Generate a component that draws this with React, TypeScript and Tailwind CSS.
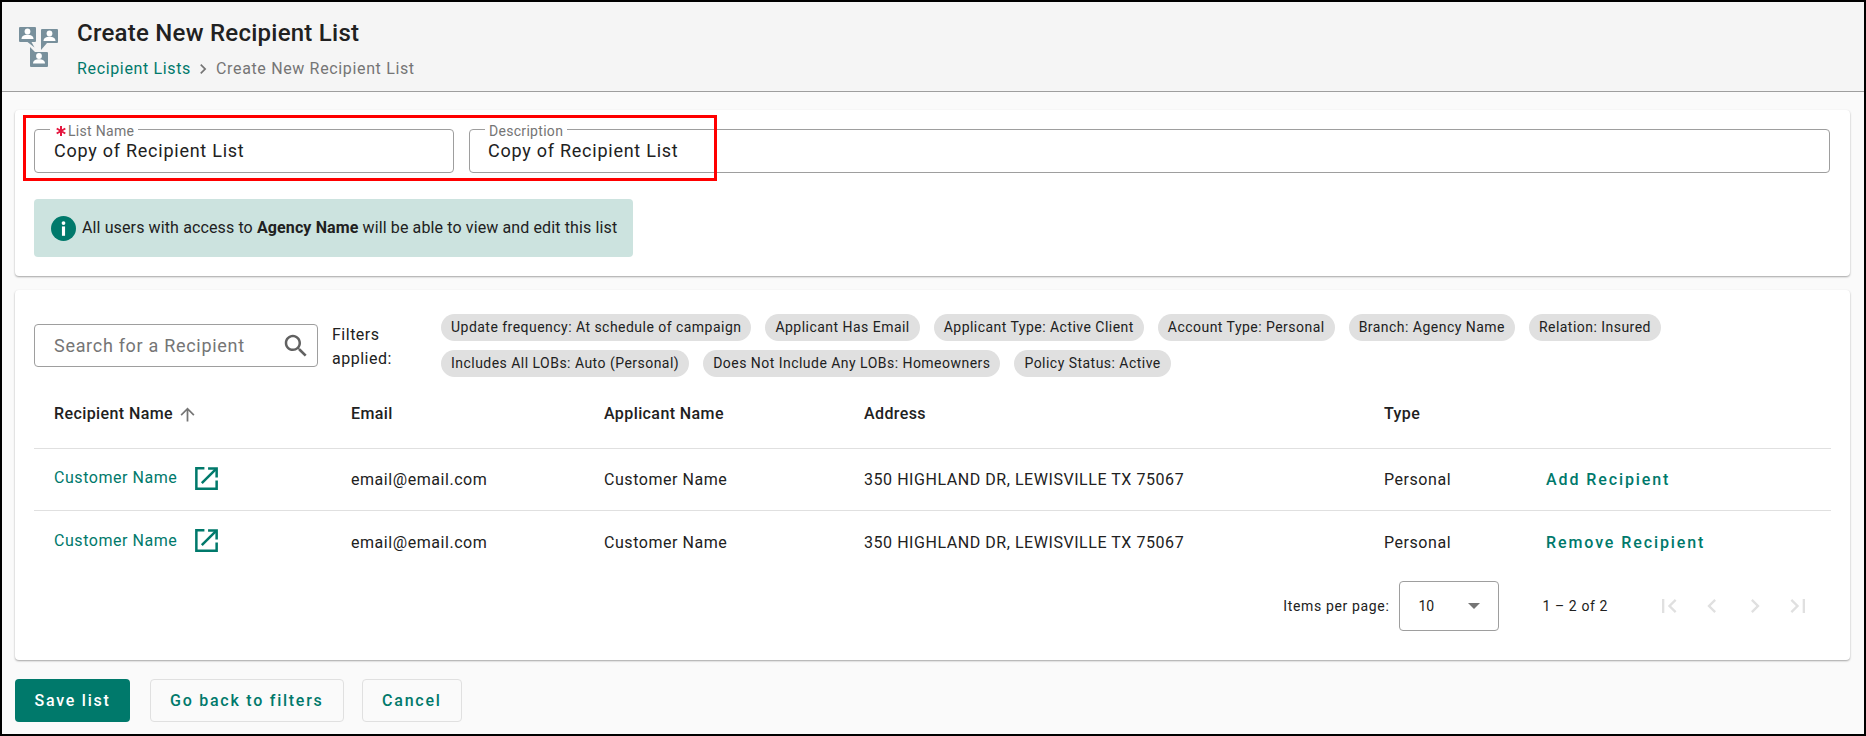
const chipRows = [
  [
    'Update frequency: At schedule of campaign',
    'Applicant Has Email',
    'Applicant Type: Active Client',
    'Account Type: Personal',
    'Branch: Agency Name',
    'Relation: Insured',
  ],
  ['Includes All LOBs: Auto (Personal)', 'Does Not Include Any LOBs: Homeowners', 'Policy Status: Active'],
];

const rows = [
  { id: 1, action: 'Add Recipient' },
  { id: 2, action: 'Remove Recipient' },
];

const gridCols = 'grid grid-cols-[297px_253px_260px_520px_162px_1fr]';

function MatIcon({ d, className }: { d: string; className: string }) {
  return (
    <svg viewBox="0 0 24 24" fill="currentColor" className={className}>
      <path d={d} />
    </svg>
  );
}

function Person({ x, y }: { x: number; y: number }) {
  return (
    <g fill="#fff" transform={`translate(${x} ${y})`}>
      <circle cx="0" cy="0" r="2.9" />
      <path d="M-6 7.5c0-3 2.8-4.2 6-4.2s6 1.2 6 4.2z" />
    </g>
  );
}

function ListIcon() {
  return (
    <svg viewBox="0 0 40 40" className="w-10 h-10 shrink-0">
      <path fill="#78909c" d="M1 0h15a1 1 0 0 1 1 1v13a1 1 0 0 1-1 1h-3.5l3 5.5-7-5.5H1a1 1 0 0 1-1-1V1a1 1 0 0 1 1-1z" />
      <path fill="#78909c" d="M23 2h15a1 1 0 0 1 1 1v12a1 1 0 0 1-1 1H28l-6 7V3a1 1 0 0 1 1-1z" />
      <path fill="#78909c" d="M11 20l5 5h12a1 1 0 0 1 1 1v13a1 1 0 0 1-1 1H12a1 1 0 0 1-1-1z" />
      <Person x={8.5} y={4.5} />
      <Person x={30.5} y={6.5} />
      <Person x={20} y={29} />
    </svg>
  );
}

function ExternalIcon() {
  return (
    <svg viewBox="0 0 22 22" fill="none" stroke="#00796b" strokeWidth="2.4" className="w-[23px] h-[23px] ml-[18px] shrink-0">
      <path d="M9 1.3H1.3v19.4h19.4V13" />
      <path d="M6.5 15.5L20 2" />
      <path d="M12.5 1.5h8.2v8.5" />
    </svg>
  );
}

function RequiredMark() {
  return (
    <svg viewBox="0 0 10 10" fill="none" stroke="#e5173f" strokeWidth="2" className="w-[10px] h-[10px] ml-[2px] mr-[2px] shrink-0">
      <path d="M5 0v10M0.7 2.5l8.6 5M0.7 7.5l8.6-5" />
    </svg>
  );
}

function LabeledInput({ label, required, className }: { label: string; required?: boolean; className: string }) {
  return (
    <div className={`relative h-[44px] rounded-[4px] border border-[#9e9e9e] flex items-center pb-[2px] text-[18px] tracking-[0.75px] text-[#212121] ${className}`}>
      <span className="absolute left-[15px] -top-[6px] bg-white px-[4px] flex items-center text-[14px] leading-[14px] tracking-[0.3px] text-[#757575]">
        {required && <RequiredMark />}
        {label}
      </span>
      Copy of Recipient List
    </div>
  );
}

function ActionButton({ children, primary }: { children: string; primary?: boolean }) {
  return (
    <button
      className={
        primary
          ? 'h-[43px] px-[19.5px] mr-[1.5px] rounded-[4px] bg-[#00796b] text-white text-[16px] font-medium tracking-[1.75px]'
          : 'h-[43px] px-[19px] rounded-[4px] border border-[#e0e0e0] text-[#00796b] text-[16px] font-medium tracking-[1.75px]'
      }
    >
      {children}
    </button>
  );
}

export default function App() {
  return (
    <div className="h-[736px] border-2 border-black bg-[#fafafa] font-['Roboto',sans-serif] flex flex-col overflow-hidden">
      <header className="h-[90px] shrink-0 bg-[#f5f5f5] border-b border-[#9e9e9e] flex pl-[17px] pt-[25px]">
        <ListIcon />
        <div className="ml-[18px] -mt-[10px]">
          <h1 className="text-[24px] leading-[32px] font-medium tracking-[0.25px] text-[#212121]">Create New Recipient List</h1>
          <div className="mt-[8px] flex items-center text-[16px] leading-[24px] tracking-[0.65px]">
            <span className="text-[#00796b]">Recipient Lists</span>
            <MatIcon d="M10 6L8.59 7.41 13.17 12l-4.58 4.59L10 18l6-6z" className="w-[20px] h-[20px] mx-[2px] text-[#757575]" />
            <span className="ml-px text-[#757575]">Create New Recipient List</span>
          </div>
        </div>
      </header>

      <main className="flex-1 px-[13px] pt-[18px]">
        <section className="relative h-[166px] w-[1835px] bg-white rounded-[4px] shadow-[0_1px_2px_rgba(0,0,0,0.35)] pl-[19px] pr-[20px] pt-[19px]">
          <div className="flex gap-[15px]">
            <LabeledInput label="List Name" required className="w-[420px] pl-[19px]" />
            <LabeledInput label="Description" className="flex-1 pl-[18px]" />
          </div>
          <div className="mt-[26px] w-[599px] h-[58px] rounded-[4px] bg-[#cce3df] flex items-center pl-[17px] text-[16px] tracking-[0.12px] text-[#212121]">
            <svg viewBox="0 0 24 24" className="w-[25px] h-[25px] mr-[6px] shrink-0">
              <circle cx="12" cy="12" r="12" fill="#00796b" />
              <rect x="10.5" y="10" width="3" height="9" fill="#fff" />
              <circle cx="12" cy="6.8" r="1.8" fill="#fff" />
            </svg>
            <span>
              All users with access to <b className="font-bold">Agency Name</b> will be able to view and edit this list
            </span>
          </div>
          {/* annotation box from the screenshot */}
          <div className="absolute left-[8px] top-[5px] w-[694px] h-[66px] border-[3px] border-[#ff0000]" />
        </section>

        <section className="mt-[14px] h-[370px] w-[1835px] bg-white rounded-[4px] shadow-[0_1px_2px_rgba(0,0,0,0.35)] px-[19px] pt-[24px]">
          <div className="flex items-center h-[63px]">
            <div className="w-[284px] h-[43px] rounded-[4px] border border-[#9e9e9e] flex items-center justify-between pl-[19px] pr-[6px] text-[18px] tracking-[0.7px] text-[#757575]">
              Search for a Recipient
              <MatIcon
                d="M15.5 14h-.79l-.28-.27C15.41 12.59 16 11.11 16 9.5 16 5.91 13.09 3 9.5 3S3 5.91 3 9.5 5.91 16 9.5 16c1.61 0 3.09-.59 4.23-1.57l.27.28v.79l5 4.99L20.49 19l-4.99-5zm-6 0C7.01 14 5 11.99 5 9.5S7.01 5 9.5 5 14 7.01 14 9.5 11.99 14 9.5 14z"
                className="w-[30px] h-[30px] text-[#616161]"
              />
            </div>
            <div className="ml-[14px] w-[109px] pt-[2px] text-[16px] leading-[24px] tracking-[0.5px] text-[#212121]">
              Filters
              <br />
              applied:
            </div>
            <div className="flex flex-col gap-[9px]">
              {chipRows.map((chipRow) => (
                <div key={chipRow[0]} className="flex gap-[14px]">
                  {chipRow.map((chip) => (
                    <span
                      key={chip}
                      className="h-[27px] px-[10px] rounded-full bg-[#e0e0e0] flex items-center text-[14px] tracking-[0.47px] text-[#212121]"
                    >
                      {chip}
                    </span>
                  ))}
                </div>
              ))}
            </div>
          </div>

          <div className={`${gridCols} h-[72px] items-center pl-[20px] pt-[3px] border-b border-[#e0e0e0] text-[16px] font-medium tracking-[0.4px] text-[#212121]`}>
            <div className="flex items-center">
              Recipient Name
              <MatIcon d="M4 12l1.41 1.41L11 7.83V20h2V7.83l5.58 5.59L20 12l-8-8-8 8z" className="w-[21px] h-[21px] ml-[4px] text-[#757575]" />
            </div>
            <div>Email</div>
            <div>Applicant Name</div>
            <div>Address</div>
            <div>Type</div>
            <div />
          </div>

          {rows.map((row, index) => (
            <div
              key={row.id}
              className={`${gridCols} h-[62px] items-center pl-[20px] text-[16px] tracking-[0.55px] text-[#212121] ${index === 0 ? 'border-b border-[#e0e0e0]' : 'pt-[2px]'}`}
            >
              <div className={`flex items-center text-[#00796b] ${index === 0 ? '-mt-[3px]' : '-mt-[5px]'}`}>
                Customer Name
                <ExternalIcon />
              </div>
              <div>email@email.com</div>
              <div>Customer Name</div>
              <div>350 HIGHLAND DR, LEWISVILLE TX 75067</div>
              <div>Personal</div>
              <div className="font-medium tracking-[1.9px] text-[#00796b]">{row.action}</div>
            </div>
          ))}

          <div className="flex items-center justify-end h-[50px] mt-[8px] text-[14px] text-[#212121]">
            <span className="tracking-[0.65px]">Items per page:</span>
            <div className="ml-[10px] w-[100px] h-[50px] rounded-[4px] border border-[#9e9e9e] flex items-center justify-between pl-[18px] pr-[18px]">
              10
              <span className="w-0 h-0 border-x-[6px] border-x-transparent border-t-[6px] border-t-[#757575]" />
            </div>
            <span className="ml-[43px] tracking-[0.6px]">1 – 2 of 2</span>
            <div className="ml-[47px] mr-[19px] flex gap-[15px] text-[#e0e0e0]">
              <MatIcon d="M18.41 16.59L13.82 12l4.59-4.59L17 6l-6 6 6 6zM6 6h2v12H6z" className="w-[28px] h-[28px]" />
              <MatIcon d="M15.41 7.41L14 6l-6 6 6 6 1.41-1.41L10.83 12z" className="w-[28px] h-[28px]" />
              <MatIcon d="M10 6L8.59 7.41 13.17 12l-4.58 4.59L10 18l6-6z" className="w-[28px] h-[28px]" />
              <MatIcon d="M5.59 7.41L10.18 12l-4.59 4.59L7 18l6-6-6-6zM16 6h2v12h-2z" className="w-[28px] h-[28px]" />
            </div>
          </div>
        </section>

        <div className="mt-[19px] flex gap-[18.5px]">
          <ActionButton primary>Save list</ActionButton>
          <ActionButton>Go back to filters</ActionButton>
          <ActionButton>Cancel</ActionButton>
        </div>
      </main>
    </div>
  );
}
